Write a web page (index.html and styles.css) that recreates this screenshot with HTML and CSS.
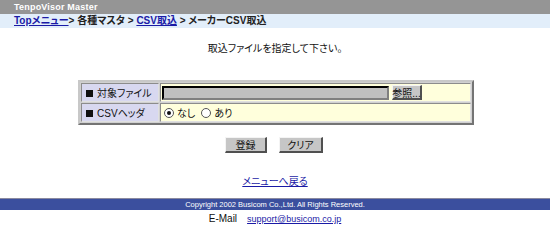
FILE: index.html
```html
<!DOCTYPE html>
<html lang="ja">
<head>
<meta charset="utf-8">
<title>メーカーCSV取込</title>
<link rel="stylesheet" href="styles.css">
</head>
<body>
<div class="header">TenpoVisor Master</div>
<div class="crumbs"><a href="#">Topメニュー</a>&gt; 各種マスタ &gt; <a href="#">CSV取込</a> &gt; メーカーCSV取込</div>
<p class="lead">取込ファイルを指定して下さい。</p>
<div class="form-wrap">
  <table class="form">
    <tr>
      <th><span class="sq"></span>対象ファイル</th>
      <td><div class="file-row"><span class="file-box"></span><span class="btn btn-browse">参照...</span></div></td>
    </tr>
    <tr>
      <th><span class="sq"></span>CSVヘッダ</th>
      <td><label class="opt"><span class="radio on"></span>なし</label><label class="opt"><span class="radio"></span>あり</label></td>
    </tr>
  </table>
</div>
<div class="actions"><span class="btn btn-act">登録</span><span class="btn btn-act wide">クリア</span></div>
<div class="back"><a href="#">メニューへ戻る</a></div>
<div class="footer">Copyright 2002 Busicom Co.,Ltd. All Rights Reserved.</div>
<div class="mail"><span class="mail-label">E-Mail</span><a href="#">support@busicom.co.jp</a></div>
</body>
</html>
```
FILE: styles.css
```css
html, body {
  margin: 0;
  padding: 0;
  background: #ffffff;
  font-family: "Liberation Sans", "Noto Sans CJK JP", sans-serif;
  font-feature-settings: "palt";
  font-size: 10px;
  color: #111;
}
a { color: #1a1aa6; }
.header {
  height: 14px;
  line-height: 14px;
  background: #959595;
  color: #fff;
  font-weight: bold;
  font-size: 9px;
  padding-left: 14px;
  letter-spacing: 0.2px;
}
.crumbs {
  height: 14px;
  line-height: 14px;
  background: #e2eefa;
  padding-left: 14px;
  font-weight: bold;
  font-size: 10px;
  color: #222;
}
.lead {
  margin: 0;
  padding-top: 14px;
  text-align: center;
  line-height: 14px;
}
.form-wrap {
  display: flex;
  justify-content: center;
  padding-top: 24px;
  padding-left: 2px;
}
.form {
  width: 396px;
  border: 2px outset #c8c8c8;
  border-collapse: separate;
  border-spacing: 1px;
  background: #d0d0d0;
}
.form th, .form td {
  height: 17px;
  padding: 0 4px;
  border: 1px inset #e0e0e0;
  text-align: left;
  font-weight: normal;
}
.form th {
  width: 68px;
  background: #d8d8f0;
  white-space: nowrap;
}
.form td { background: #ffffdc; padding: 0 4px 0 1px; }
.sq {
  display: inline-block;
  width: 7px;
  height: 7px;
  background: #111;
  margin-right: 4px;
  vertical-align: 0;
}
.file-row { display: flex; align-items: center; gap: 3px; }
.file-box {
  width: 223px;
  height: 10px;
  background: #c0c0c0;
  border: 2px inset #808080;
  border-top-color: #404040;
  border-left-color: #404040;
}
.btn {
  display: inline-flex;
  align-items: center;
  justify-content: center;
  background: #c6c6c6;
  border-style: solid;
  border-width: 1px 2px 2px 1px;
  border-color: #f4f4f4 #505050 #505050 #f4f4f4;
  box-sizing: border-box;
  font-size: 10px;
  white-space: nowrap;
}
.btn-browse { width: 30px; height: 15px; }
.opt { display: inline-flex; align-items: center; margin-right: 4px; margin-left: 2px; }
.radio {
  width: 8px;
  height: 8px;
  border: 1px solid #555;
  border-radius: 50%;
  background: #fff;
  margin-right: 3px;
  position: relative;
  box-sizing: content-box;
}
.radio.on::after {
  content: "";
  position: absolute;
  left: 2px;
  top: 2px;
  width: 4px;
  height: 4px;
  border-radius: 50%;
  background: #111;
}
.actions {
  display: flex;
  justify-content: center;
  gap: 12px;
  padding-top: 12px;
  padding-right: 2px;
}
.btn-act { width: 42px; height: 16px; }
.btn-act.wide { width: 44px; }
.back {
  text-align: center;
  padding-top: 22px;
  line-height: 14px;
}
.footer {
  margin-top: 9px;
  height: 11px;
  line-height: 11px;
  background: #3b4f9e;
  border-top: 1px solid #8a8aa0;
  color: #fff;
  font-size: 7.5px;
  text-align: center;
}
.mail {
  display: flex;
  justify-content: center;
  gap: 10px;
  padding-top: 2px;
  line-height: 14px;
  font-size: 9px;
}
.mail-label { font-size: 10px; }
```
